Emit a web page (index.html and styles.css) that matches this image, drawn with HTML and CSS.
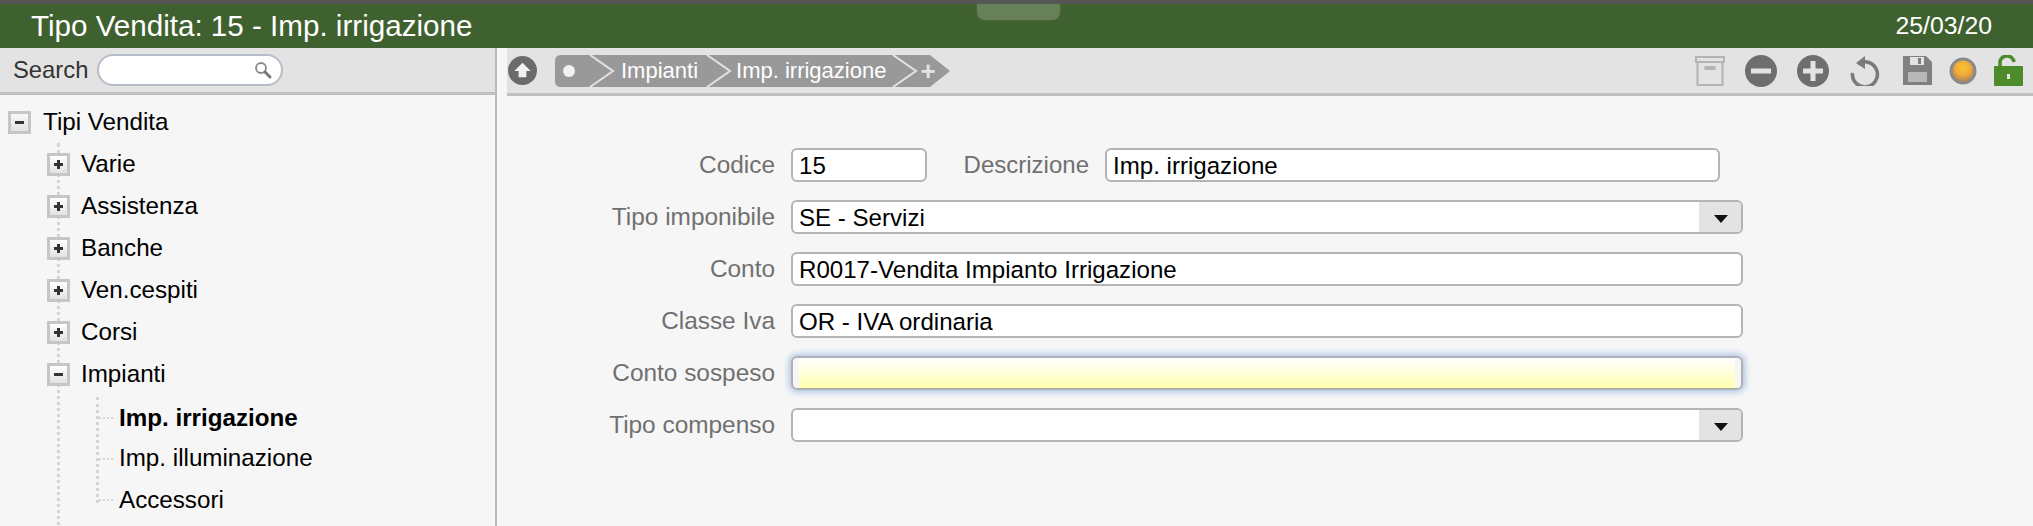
FILE: index.html
```html
<!DOCTYPE html>
<html lang="it">
<head>
<meta charset="utf-8">
<title>Tipo Vendita</title>
<link rel="stylesheet" href="styles.css">
</head>
<body>
<header class="titlebar">
  <div class="handle"></div>
  <h1 class="title">Tipo Vendita: 15 - Imp. irrigazione</h1>
  <span class="date">25/03/20</span>
</header>
<div class="main">
  <aside class="side">
    <div class="search-bar">
      <span class="search-label">Search</span>
      <div class="search-box">
        <svg class="search-icon" viewBox="0 0 20 20"><circle cx="8" cy="8" r="5" fill="#fff" stroke="#8a8a8a" stroke-width="1.8"/><path d="M12 12l5 5" stroke="#777" stroke-width="3" stroke-linecap="round"/></svg>
      </div>
    </div>
    <div class="tree">
      <div class="node root"><span class="box"><i class="h"></i></span><span>Tipi Vendita</span></div>
      <div class="branch">
        <div class="node"><span class="box"><i class="h"></i><i class="v"></i></span><span>Varie</span></div>
        <div class="node"><span class="box"><i class="h"></i><i class="v"></i></span><span>Assistenza</span></div>
        <div class="node"><span class="box"><i class="h"></i><i class="v"></i></span><span>Banche</span></div>
        <div class="node"><span class="box"><i class="h"></i><i class="v"></i></span><span>Ven.cespiti</span></div>
        <div class="node"><span class="box"><i class="h"></i><i class="v"></i></span><span>Corsi</span></div>
        <div class="node"><span class="box"><i class="h"></i></span><span>Impianti</span></div>
        <div class="leaves">
          <div class="leaf current">Imp. irrigazione</div>
          <div class="leaf mid">Imp. illuminazione</div>
          <div class="leaf">Accessori</div>
        </div>
      </div>
    </div>
  </aside>
  <main class="content">
    <div class="toolbar">
      <svg class="up" viewBox="0 0 30 30"><circle cx="15" cy="15" r="15" fill="#6b6b6b"/><path d="M15 7l8.500 8.500H19V22h-8v-6.500H6.500z" fill="#f2f2f2"/></svg>
      <div class="crumbs">
        <svg class="crumb-bg" viewBox="0 0 395 32" preserveAspectRatio="none">
          <path d="M6 0H375L395 16L375 32H6Q0 32 0 26V6Q0 0 6 0Z" fill="#999"/>
          <path d="M35 0L58 16L35 32M152 0L175 16L152 32M338 0L361 16L338 32" fill="none" stroke="#e3e3e3" stroke-width="2"/>
        </svg>
        <span class="crumb-dot"></span>
        <span class="crumb c1">Impianti</span>
        <span class="crumb c2">Imp. irrigazione</span>
        <span class="crumb-plus">+</span>
      </div>
      <div class="tools">
        <svg class="tool t-archive" viewBox="0 0 30 30"><path d="M1 1h28v5H1zM2.500 6h25v23h-25z" fill="none" stroke="#b4b4b4" stroke-width="2"/><rect x="9" y="10" width="12" height="4" rx="2" fill="#b4b4b4"/></svg>
        <svg class="tool" viewBox="0 0 32 32"><circle cx="16" cy="16" r="16" fill="#6e6e6e"/><rect x="6" y="13.500" width="20" height="5" fill="#e3e3e3"/></svg>
        <svg class="tool" viewBox="0 0 32 32"><circle cx="16" cy="16" r="16" fill="#6e6e6e"/><path d="M6 13.500h7.500V6h5v7.500H26v5h-7.500V26h-5v-7.500H6z" fill="#e3e3e3"/></svg>
        <svg class="tool t-undo" viewBox="0 0 30 30"><path d="M8 8A12.500 12.500 0 1 1 2.500 17" fill="none" stroke="#7a7a7a" stroke-width="3.500"/><path d="M15 0v13L6 7z" fill="#7a7a7a"/></svg>
        <svg class="tool t-save" viewBox="0 0 29 29"><path d="M0 0h23l6 6v23H0z" fill="#808080"/><rect x="7" y="1" width="14" height="8" fill="#e3e3e3"/><rect x="15" y="2" width="3" height="6" fill="#808080"/><rect x="5" y="16" width="19" height="10" fill="#b8b8b8"/></svg>
        <svg class="tool t-lamp" viewBox="0 0 28 28"><defs><radialGradient id="lamp" cx="50%" cy="35%" r="60%"><stop offset="0" stop-color="#f9c42c"/><stop offset="0.6" stop-color="#eeaa3a"/><stop offset="1" stop-color="#b98a52"/></radialGradient></defs><circle cx="14" cy="14" r="13.500" fill="#8a8a8a"/><circle cx="14" cy="14" r="10.500" fill="url(#lamp)"/></svg>
        <svg class="tool t-lock" viewBox="0 0 29 32"><path d="M6 13V8a7 6.500 0 0 1 14 -1" fill="none" stroke="#4d8a29" stroke-width="3.500"/><rect y="11" width="29" height="20" rx="1" fill="#4d8a29"/><rect x="13" y="19" width="3" height="5" fill="#e3e3e3"/></svg>
      </div>
    </div>
    <form class="form">
      <div class="row">
        <label class="lab">Codice</label>
        <span class="fld short">15</span>
        <label class="lab2">Descrizione</label>
        <span class="fld desc">Imp. irrigazione</span>
      </div>
      <div class="row">
        <label class="lab">Tipo imponibile</label>
        <span class="fld wide combo">SE - Servizi<span class="arrow"></span></span>
      </div>
      <div class="row">
        <label class="lab">Conto</label>
        <span class="fld wide">R0017-Vendita Impianto Irrigazione</span>
      </div>
      <div class="row">
        <label class="lab">Classe Iva</label>
        <span class="fld wide">OR - IVA ordinaria</span>
      </div>
      <div class="row">
        <label class="lab">Conto sospeso</label>
        <span class="fld wide focus"></span>
      </div>
      <div class="row">
        <label class="lab">Tipo compenso</label>
        <span class="fld wide combo"><span class="arrow"></span></span>
      </div>
    </form>
  </main>
</div>
</body>
</html>
```
FILE: styles.css
```css
* { box-sizing: border-box; }
html, body { margin: 0; height: 526px; overflow: hidden; }
body { background: #f6f6f6; font-family: "Liberation Sans", Arial, sans-serif; color: #000; }

.titlebar { height: 48px; background: #3f612f; border-top: 4px solid #555; display: flex; align-items: center; justify-content: space-between; padding: 0 41px 0 31px; color: #fff; position: relative; }
.title { margin: 0; font-size: 29.600px; font-weight: 400; }
.date { font-size: 24.800px; }
.handle { position: absolute; left: 977px; top: 0; width: 83px; height: 16px; background: #678057; border-radius: 0 0 8px 8px; box-shadow: 0 0 2px #587348; }

.main { display: flex; height: 478px; }
.side { width: 497px; border-right: 2px solid #bbb; overflow: hidden; flex: none; }
.search-bar { height: 47px; background: #e3e3e3; border-bottom: 3px solid #c0c0c0; display: flex; align-items: center; padding-left: 13px; font-size: 23.800px; color: #333; }
.search-label { width: 84px; }
.search-box { width: 186px; height: 32px; background: #fff; border: 2px solid #b6bcc8; border-radius: 16px; display: flex; align-items: center; justify-content: flex-end; padding-right: 8px; }
.search-icon { width: 20px; height: 20px; }

.tree { font-size: 24.200px; padding-top: 6px; }
.node { height: 42px; display: flex; align-items: center; }
.root { padding-left: 8px; }
.box { width: 23px; height: 23px; border: 3px solid #c6c6c6; background: linear-gradient(#f8f8f8, #e2e2e2); margin-right: 11px; position: relative; flex: none; }
.root .box { margin-right: 12px; }
.box .h { position: absolute; left: 4px; top: 7px; width: 9px; height: 3px; background: #333; }
.box .v { position: absolute; left: 7px; top: 4px; width: 3px; height: 9px; background: #333; }
.branch { margin-left: 57px; padding-bottom: 60px; border-left: 3px dotted #d4d4d4; }
.branch .node { margin-left: -13px; }
.branch .box { background: linear-gradient(#fff, #e2e2e2); }
.leaves { margin-left: 36px; border-left: 3px dotted #d4d4d4; height: 106px; }
.leaf { height: 41px; display: flex; align-items: center; padding-left: 20px; position: relative; white-space: nowrap; }
.leaf::before { content: ""; position: absolute; left: 0; top: 20px; width: 14px; border-top: 2px dotted #d4d4d4; }
.leaf.current { font-weight: 700; height: 41px; margin-top: 2px; }
.leaf.mid { height: 39px; margin-bottom: 2px; }

.content { flex: 1; margin-left: 10px; min-width: 0; }
.toolbar { height: 48px; background: #e3e3e3; border-bottom: 3px solid #c0c0c0; display: flex; align-items: center; padding-left: 1px; }
.up { width: 29px; height: 29px; flex: none; }
.crumbs { position: relative; width: 395px; height: 32px; margin-left: 18px; display: flex; align-items: center; color: #fff; font-size: 22px; flex: none; }
.crumb-bg { position: absolute; inset: 0; width: 100%; height: 100%; }
.crumb-dot { position: relative; margin-left: 8px; width: 12px; height: 12px; border-radius: 50%; background: #f2f2f2; }
.crumb { position: relative; white-space: nowrap; }
.c1 { margin-left: 46px; }
.c2 { margin-left: 38px; }
.crumb-plus { position: relative; margin-left: 34px; font-size: 26px; line-height: 1; font-weight: 700; color: #e3e3e3; }
.tools { margin-left: auto; display: flex; align-items: center; gap: 20px; padding-right: 10px; }
.tool { width: 32px; height: 32px; display: block; flex: none; }
.t-archive { width: 30px; height: 30px; }
.t-undo { width: 30px; height: 30px; margin-left: 1px; }
.t-save { width: 29px; height: 29px; margin-left: 3px; }
.t-lamp { width: 28px; height: 28px; margin-left: -3px; }
.t-lock { width: 29px; height: 32px; margin-left: -3px; }

.form { padding-top: 52px; font-size: 24.100px; }
.row { display: flex; align-items: center; height: 34px; margin-bottom: 18px; }
.lab { width: 268px; margin-right: 16px; text-align: right; color: #707070; font-size: 24.400px; }
.lab2 { width: 162px; margin-right: 16px; text-align: right; color: #707070; font-size: 24px; }
.fld { display: block; height: 34px; line-height: 32px; background: #fff; border: 2px solid #b4b4b4; border-radius: 6px; padding: 0 6px; color: #000; position: relative; white-space: nowrap; overflow: hidden; }
.short { width: 136px; }
.desc { width: 615px; }
.wide { width: 952px; }
.combo .arrow { position: absolute; right: 0; top: 0; bottom: 0; width: 42px; background: #e3e3e3; }
.combo .arrow::after { content: ""; position: absolute; left: 15px; top: 13px; border: 7px solid transparent; border-top: 8px solid #111; border-bottom: 0; }
.focus { border-color: #b0b0b0; box-shadow: 0 0 6px 2px #a9c4e6; background: linear-gradient(#fff, #ffffb0) no-repeat 6px 0 / calc(100% - 12px) 100%; }
```
